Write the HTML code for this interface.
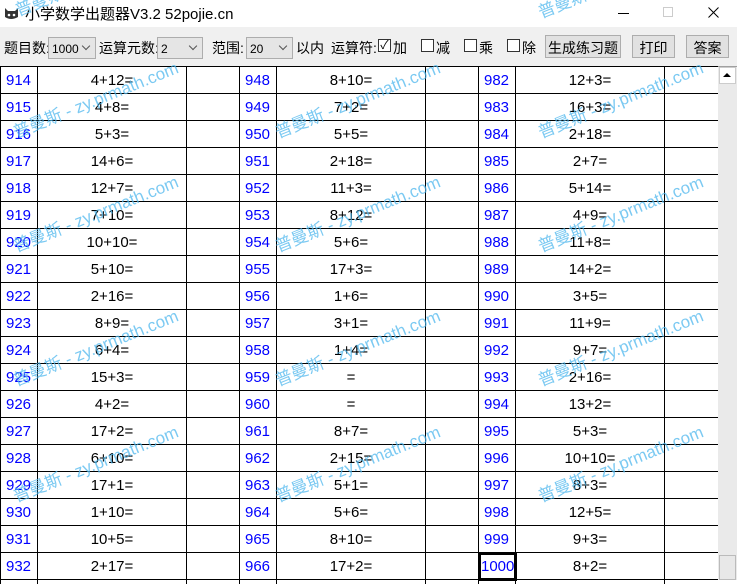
<!DOCTYPE html>
<html style="width:739px;height:587px;overflow:hidden"><head><meta charset="utf-8"><style>
*{margin:0;padding:0;box-sizing:border-box}
body{width:739px;height:587px;overflow:hidden;background:#fff;font-family:"Liberation Sans","Noto Sans CJK SC",sans-serif;position:relative}
.title{position:absolute;left:0;top:0;width:739px;height:27px;background:#fff}
.title .t{position:absolute;left:25px;top:3px;font-size:15px;color:#000}
.tb{position:absolute;left:0;top:27px;width:739px;height:40px;background:#f0f0f0;font-size:14px}
.lbl{position:absolute;top:11px}
.cb{position:absolute;top:10px;height:22px;background:#e5e5e5;border:1px solid #adadad;font-size:12px;padding:4px 0 0 3px}
.cb:after{content:"";position:absolute;right:6px;top:5px;width:5px;height:5px;border-right:1px solid #555;border-bottom:1px solid #555;transform:rotate(45deg)}
.chk{position:absolute;top:12px;width:13px;height:13px;border:1px solid #333;background:#fff}
.btn{position:absolute;top:8px;height:23px;background:#e1e1e1;border:1px solid #adadad;font-size:14px;text-align:center;padding-top:2px}
table{position:absolute;left:0;top:66px;border-collapse:collapse;table-layout:fixed;width:718px}
td{border:1px solid #000;height:27px;font-size:15px;padding:0;white-space:nowrap}
td.n{color:#00f;padding-left:5px}
td.e{text-align:center}
.wm{position:absolute;color:#4fb8ee;opacity:.75;font-size:17px;transform:rotate(-22deg);transform-origin:0 100%;white-space:nowrap;pointer-events:none;z-index:5}
.sb{position:absolute;left:718px;top:67px;width:19px;height:513px;background:#eaeaea}
</style></head><body>
<div class="title">
<svg style="position:absolute;left:3px;top:5px" width="17" height="16" viewBox="0 0 17 16"><path d="M2 3 L5 6 L12 6 L15 3 L15 12 Q8 16 2 12Z" fill="#333"/><circle cx="6" cy="10" r="1.3" fill="#fff"/><circle cx="11" cy="10" r="1.3" fill="#fff"/></svg>
<div class="t">小学数学出题器V3.2 52pojie.cn</div>
<div style="position:absolute;left:618px;top:13px;width:11px;height:1px;background:#000"></div>
<div style="position:absolute;left:663px;top:7px;width:10px;height:10px;border:1px solid #ccc"></div>
<svg style="position:absolute;left:708px;top:7px" width="11" height="11" viewBox="0 0 11 11"><path d="M0.5 0.5L10.5 10.5M10.5 0.5L0.5 10.5" stroke="#000" stroke-width="1"/></svg>
</div>
<div class="tb">
<div class="lbl" style="left:4px">题目数:</div>
<div class="cb" style="left:48px;width:48px">1000</div>
<div class="lbl" style="left:99px">运算元数:</div>
<div class="cb" style="left:157px;width:46px">2</div>
<div class="lbl" style="left:212px">范围:</div>
<div class="cb" style="left:246px;width:47px">20</div>
<div class="lbl" style="left:296px">以内</div>
<div class="lbl" style="left:331px">运算符:</div>
<div class="chk" style="left:378px;font-size:12px;line-height:11px;text-align:center">✓</div><div class="lbl" style="left:393px">加</div>
<div class="chk" style="left:421px"></div><div class="lbl" style="left:436px">减</div>
<div class="chk" style="left:464px"></div><div class="lbl" style="left:479px">乘</div>
<div class="chk" style="left:507px"></div><div class="lbl" style="left:522px">除</div>
<div class="btn" style="left:545px;width:76px">生成练习题</div>
<div class="btn" style="left:632px;width:43px">打印</div>
<div class="btn" style="left:686px;width:43px">答案</div>
</div>
<div style="position:absolute;left:0;top:66px;width:739px;height:1px;background:#a0a0a0"></div>
<div style="position:absolute;left:0;top:66px;width:718px;height:518px;overflow:hidden">
<table style="top:0">
<colgroup><col style="width:37px"><col style="width:149px"><col style="width:53px"><col style="width:37px"><col style="width:149px"><col style="width:53px"><col style="width:37px"><col style="width:149px"><col style="width:54px"></colgroup>
<tr><td class="n">914</td><td class="e">4+12=</td><td></td><td class="n">948</td><td class="e">8+10=</td><td></td><td class="n">982</td><td class="e">12+3=</td><td></td></tr>
<tr><td class="n">915</td><td class="e">4+8=</td><td></td><td class="n">949</td><td class="e">7+2=</td><td></td><td class="n">983</td><td class="e">16+3=</td><td></td></tr>
<tr><td class="n">916</td><td class="e">5+3=</td><td></td><td class="n">950</td><td class="e">5+5=</td><td></td><td class="n">984</td><td class="e">2+18=</td><td></td></tr>
<tr><td class="n">917</td><td class="e">14+6=</td><td></td><td class="n">951</td><td class="e">2+18=</td><td></td><td class="n">985</td><td class="e">2+7=</td><td></td></tr>
<tr><td class="n">918</td><td class="e">12+7=</td><td></td><td class="n">952</td><td class="e">11+3=</td><td></td><td class="n">986</td><td class="e">5+14=</td><td></td></tr>
<tr><td class="n">919</td><td class="e">7+10=</td><td></td><td class="n">953</td><td class="e">8+12=</td><td></td><td class="n">987</td><td class="e">4+9=</td><td></td></tr>
<tr><td class="n">920</td><td class="e">10+10=</td><td></td><td class="n">954</td><td class="e">5+6=</td><td></td><td class="n">988</td><td class="e">11+8=</td><td></td></tr>
<tr><td class="n">921</td><td class="e">5+10=</td><td></td><td class="n">955</td><td class="e">17+3=</td><td></td><td class="n">989</td><td class="e">14+2=</td><td></td></tr>
<tr><td class="n">922</td><td class="e">2+16=</td><td></td><td class="n">956</td><td class="e">1+6=</td><td></td><td class="n">990</td><td class="e">3+5=</td><td></td></tr>
<tr><td class="n">923</td><td class="e">8+9=</td><td></td><td class="n">957</td><td class="e">3+1=</td><td></td><td class="n">991</td><td class="e">11+9=</td><td></td></tr>
<tr><td class="n">924</td><td class="e">6+4=</td><td></td><td class="n">958</td><td class="e">1+4=</td><td></td><td class="n">992</td><td class="e">9+7=</td><td></td></tr>
<tr><td class="n">925</td><td class="e">15+3=</td><td></td><td class="n">959</td><td class="e">=</td><td></td><td class="n">993</td><td class="e">2+16=</td><td></td></tr>
<tr><td class="n">926</td><td class="e">4+2=</td><td></td><td class="n">960</td><td class="e">=</td><td></td><td class="n">994</td><td class="e">13+2=</td><td></td></tr>
<tr><td class="n">927</td><td class="e">17+2=</td><td></td><td class="n">961</td><td class="e">8+7=</td><td></td><td class="n">995</td><td class="e">5+3=</td><td></td></tr>
<tr><td class="n">928</td><td class="e">6+10=</td><td></td><td class="n">962</td><td class="e">2+15=</td><td></td><td class="n">996</td><td class="e">10+10=</td><td></td></tr>
<tr><td class="n">929</td><td class="e">17+1=</td><td></td><td class="n">963</td><td class="e">5+1=</td><td></td><td class="n">997</td><td class="e">8+3=</td><td></td></tr>
<tr><td class="n">930</td><td class="e">1+10=</td><td></td><td class="n">964</td><td class="e">5+6=</td><td></td><td class="n">998</td><td class="e">12+5=</td><td></td></tr>
<tr><td class="n">931</td><td class="e">10+5=</td><td></td><td class="n">965</td><td class="e">8+10=</td><td></td><td class="n">999</td><td class="e">9+3=</td><td></td></tr>
<tr><td class="n">932</td><td class="e">2+17=</td><td></td><td class="n">966</td><td class="e">17+2=</td><td></td><td class="n" style="outline:3px solid #000;outline-offset:-2px;padding-left:2px">1000</td><td class="e">8+2=</td><td></td></tr>
<tr><td></td><td></td><td></td><td></td><td></td><td></td><td></td><td></td><td></td></tr>
</table>
</div>
<div class="sb">
<div style="position:absolute;left:1px;top:0;width:17px;height:17px;background:#fff;border:1px solid #ccc"></div>
<div style="position:absolute;left:5px;top:6px;width:0;height:0;border-left:4px solid transparent;border-right:4px solid transparent;border-bottom:4px solid #000"></div>
<div style="position:absolute;left:1px;top:488px;width:17px;height:25px;background:#e8e8e8;border:1px solid #bbb"></div>
</div>
<div style="position:absolute;left:737px;top:0;width:2px;height:587px;background:#fff"></div>
<div style="position:absolute;left:0;top:584px;width:739px;height:3px;background:#fff"></div>
<div class="wm" style="left:18px;top:118px">普曼斯 - zy.prmath.com</div>
<div class="wm" style="left:18px;top:232px">普曼斯 - zy.prmath.com</div>
<div class="wm" style="left:18px;top:366px">普曼斯 - zy.prmath.com</div>
<div class="wm" style="left:18px;top:482px">普曼斯 - zy.prmath.com</div>
<div class="wm" style="left:280px;top:118px">普曼斯 - zy.prmath.com</div>
<div class="wm" style="left:280px;top:232px">普曼斯 - zy.prmath.com</div>
<div class="wm" style="left:280px;top:366px">普曼斯 - zy.prmath.com</div>
<div class="wm" style="left:280px;top:482px">普曼斯 - zy.prmath.com</div>
<div class="wm" style="left:543px;top:118px">普曼斯 - zy.prmath.com</div>
<div class="wm" style="left:543px;top:232px">普曼斯 - zy.prmath.com</div>
<div class="wm" style="left:543px;top:366px">普曼斯 - zy.prmath.com</div>
<div class="wm" style="left:543px;top:482px">普曼斯 - zy.prmath.com</div>
<div class="wm" style="left:20px;top:-4px">普曼斯</div>
<div class="wm" style="left:543px;top:-2px">普曼斯</div>
</body></html>
